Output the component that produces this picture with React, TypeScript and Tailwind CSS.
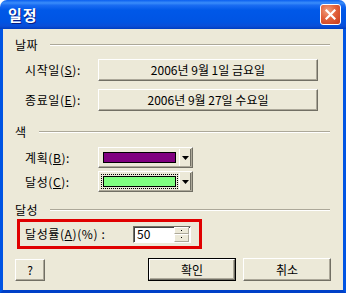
import React from "react";

const font = { fontFamily: '"Noto Sans CJK KR", "Noto Sans", sans-serif' };

function Bevel({ children, className = "" }: { children?: React.ReactNode; className?: string }) {
  return (
    <div
      className={
        "flex items-center justify-center bg-[#ECE9D8] border border-t-white border-l-white border-b-[#716F64] border-r-[#716F64] shadow-[inset_-1px_-1px_0_#ACA899] text-[12px] text-black " +
        className
      }
    >
      {children}
    </div>
  );
}

function Section({ title }: { title: string }) {
  return (
    <div className="flex items-center h-[14px] pl-[12px] pr-[13px]">
      <span className="text-[12px] leading-none text-black tracking-[0.5px]">{title}</span>
      <div className="flex-1 ml-[12px] h-[2px] border-t border-t-[#ACA899] border-b border-b-white" />
    </div>
  );
}

function ColorCombo({ color, focused }: { color: string; focused?: boolean }) {
  return (
    <div className="w-[95px] h-[21px] flex items-center bg-[#ECE9D8] border border-t-white border-l-white border-b-[#716F64] border-r-[#716F64] shadow-[inset_-1px_-1px_0_#ACA899]">
      <div
        className={
          "ml-[2px] w-[77px] h-[15px] p-[1px] " +
          (focused ? "border border-dotted border-black" : "border border-transparent")
        }
      >
        <div className="w-full h-full border border-black" style={{ background: color }} />
      </div>
      <div className="ml-[1px] w-[12px] h-[17px] flex items-center justify-center bg-[#ECE9D8] border-l border-l-white border-r border-r-[#716F64]">
        <svg width="7" height="4" viewBox="0 0 7 4">
          <path d="M0 0h7L3.5 4z" fill="#000" />
        </svg>
      </div>
    </div>
  );
}

export default function App() {
  return (
    <div className="w-[346px] h-[293px] flex flex-col overflow-hidden" style={font}>
      {/* Title bar */}
      <div className="h-[29px] flex items-center px-[8px] rounded-t-[7px] bg-[linear-gradient(to_bottom,#0A5FF0_0%,#3A8DFA_10%,#1A6CF2_18%,#0058E8_35%,#0054E3_75%,#0A4ED8_90%,#003DC0_100%)]">
        <span className="text-white font-bold text-[15px] leading-none flex-1 tracking-[1px] [text-shadow:1px_1px_0_#0A1E80]">일정</span>
        <div className="w-[21px] h-[21px] rounded-[3px] border border-white flex items-center justify-center bg-[radial-gradient(circle_at_35%_30%,#F0A080_0%,#E2623C_45%,#C8391A_100%)] mr-[-3px]">
          <svg width="11" height="11" viewBox="0 0 11 11">
            <path d="M1.5 1.5l8 8M9.5 1.5l-8 8" stroke="#fff" strokeWidth="2.2" strokeLinecap="square" />
          </svg>
        </div>
      </div>
      {/* Body */}
      <div className="flex-1 flex flex-col bg-[#ECE9D8] border-x-[3px] border-b-[3px] border-x-[#0054E3] border-b-[#0040C8]">
        <div className="mt-[9px]">
          <Section title="날짜" />
        </div>
        <div className="flex items-center mt-[7px] pl-[22px]">
          <span className="w-[73px] text-[12px] leading-none tracking-[0.6px]">시작일(<u>S</u>):</span>
          <Bevel className="w-[220px] h-[22px]">2006년 9월 1일 금요일</Bevel>
        </div>
        <div className="flex items-center mt-[8px] pl-[22px]">
          <span className="w-[73px] text-[12px] leading-none tracking-[0.6px]">종료일(<u>E</u>):</span>
          <Bevel className="w-[220px] h-[22px]">2006년 9월 27일 수요일</Bevel>
        </div>
        <div className="mt-[14px]">
          <Section title="색" />
        </div>
        <div className="flex items-center mt-[8px] pl-[22px]">
          <span className="w-[73px] text-[12px] leading-none tracking-[0.6px]">계획(<u>B</u>):</span>
          <ColorCombo color="#800080" />
        </div>
        <div className="flex items-center mt-[3px] pl-[22px]">
          <span className="w-[73px] text-[12px] leading-none tracking-[0.6px]">달성(<u>C</u>):</span>
          <ColorCombo color="#80FF80" focused />
        </div>
        <div className="mt-[11px]">
          <Section title="달성" />
        </div>
        <div className="ml-[14px] mt-[2px] w-[185px] h-[30px] border-[3px] border-[#E00000] flex items-center pl-[5px]">
          <span className="w-[108px] text-[12px] leading-none tracking-[0.6px]">달성률(<u>A</u>)(%) :</span>
          <div className="w-[58px] h-[17px] flex items-center bg-white border border-t-[#716F64] border-l-[#716F64] border-b-white border-r-white shadow-[inset_1px_1px_0_#404040]">
            <span className="flex-1 pl-[3px] text-[12px] leading-none">50</span>
            <div className="w-[15px] h-[15px] mr-[1px] flex flex-col">
              <div className="flex-1 flex items-center justify-center bg-[#ECE9D8] border border-t-white border-l-white border-b-[#ACA899] border-r-[#ACA899]">
                <div className="w-[1px] h-[1px] bg-black" />
              </div>
              <div className="flex-1 flex items-center justify-center bg-[#ECE9D8] border border-t-white border-l-white border-b-[#ACA899] border-r-[#ACA899]">
                <div className="w-[1px] h-[1px] bg-black" />
              </div>
            </div>
          </div>
        </div>
        <div className="flex items-center mt-[9px] pl-[12px] pr-[12px]">
          <Bevel className="w-[30px] h-[22px]">?</Bevel>
          <div className="flex-1" />
          <div className="w-[88px] h-[23px] border border-black flex">
            <Bevel className="flex-1">확인</Bevel>
          </div>
          <Bevel className="ml-[7px] w-[88px] h-[23px]">취소</Bevel>
        </div>
      </div>
    </div>
  );
}
